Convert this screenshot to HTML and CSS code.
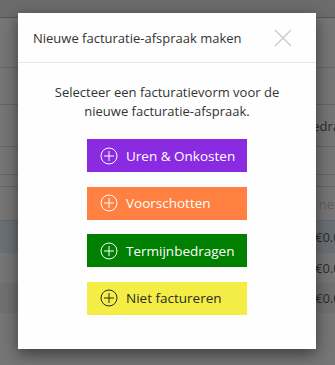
FILE: index.html
```html
<!DOCTYPE html>
<html lang="nl">
<head>
<meta charset="utf-8">
<title>Nieuwe facturatie-afspraak</title>
<link rel="stylesheet" href="styles.css">
</head>
<body>
<div class="page">
  <div class="bg-row r-top"></div>
  <div class="bg-row r-a"></div>
  <div class="bg-row r-b"></div>
  <div class="bg-row r-c"><span class="bg-text">Termijnbedragen</span></div>
  <div class="bg-row r-d"></div>
  <div class="bg-row r-e"></div>
  <div class="bg-row r-f"><span class="bg-text muted">Totaal netto</span></div>
  <div class="bg-row r-g"><span class="bg-text amount">€0.00</span></div>
  <div class="bg-row r-h"><span class="bg-text amount">€0.00</span></div>
  <div class="bg-row r-i"><span class="bg-text amount">€0.00</span></div>
</div>

<div class="modal">
  <div class="modal-header">
    <h4 class="modal-title">Nieuwe facturatie-afspraak maken</h4>
    <button class="close" aria-label="Sluiten">
      <svg width="18" height="18" viewBox="0 0 18 18"><path d="M1 1L17 17M17 1L1 17" stroke="#c8c8c8" stroke-width="1.2" fill="none"/></svg>
    </button>
  </div>
  <div class="modal-body">
    <p class="intro">Selecteer een facturatievorm voor de nieuwe facturatie-afspraak.</p>
    <div class="choices">
      <button class="choice purple"><svg class="plus" viewBox="0 0 18 18"><circle cx="9" cy="9" r="8" /><path d="M9 4V14M4 9H14"/></svg>Uren &amp; Onkosten</button>
      <button class="choice orange"><svg class="plus" viewBox="0 0 18 18"><circle cx="9" cy="9" r="8" /><path d="M9 4V14M4 9H14"/></svg>Voorschotten</button>
      <button class="choice green"><svg class="plus" viewBox="0 0 18 18"><circle cx="9" cy="9" r="8" /><path d="M9 4V14M4 9H14"/></svg>Termijnbedragen</button>
      <button class="choice yellow"><svg class="plus" viewBox="0 0 18 18"><circle cx="9" cy="9" r="8" /><path d="M9 4V14M4 9H14"/></svg>Niet factureren</button>
    </div>
  </div>
</div>
</body>
</html>
```

FILE: styles.css
```css
* { box-sizing: border-box; }
html, body {
  margin: 0;
  padding: 0;
  width: 335px;
  height: 365px;
  overflow: hidden;
  background: #767676;
  font-family: "Open Sans", "Liberation Sans", sans-serif;
}
.page {
  display: flex;
  flex-direction: column;
}
.bg-row {
  display: flex;
  align-items: center;
  padding-left: 258px;
  border-bottom: 1px solid #62666b;
  font-size: 13px;
  color: #2b2b2b;
  white-space: nowrap;
}
.r-top { height: 18px; background: #6c6c6c; border-bottom-color: #555; }
.r-a { height: 50px; }
.r-b { height: 37px; }
.r-c { height: 42px; }
.r-d { height: 28px; }
.r-e { height: 12px; }
.r-f { height: 34px; }
.r-g { height: 32px; background: #6a7075; border-bottom: none; }
.r-h { height: 30px; border-bottom: none; }
.r-i { height: 30px; background: #707070; border-bottom: none; }
.bg-text.muted { color: #5e5e5e; padding-left: 20px; }
.bg-text.amount { padding-left: 57px; }

.modal {
  position: absolute;
  top: 13px;
  left: 18px;
  width: 298px;
  height: 336px;
  background: #fefefe;
  box-shadow: 0 5px 15px rgba(0, 0, 0, 0.5);
  display: flex;
  flex-direction: column;
}
.modal-header {
  height: 50px;
  flex: none;
  display: flex;
  align-items: center;
  justify-content: space-between;
  padding: 0 24px 0 15px;
  border-bottom: 1px solid #e5e5e5;
}
.modal-title {
  margin: 0;
  font-size: 13px;
  font-weight: 400;
  color: #333;
}
.close {
  border: 0;
  background: none;
  padding: 0;
  width: 18px;
  height: 18px;
  display: flex;
}
.modal-body {
  padding: 20px 15px 0;
  display: flex;
  flex-direction: column;
  align-items: center;
}
.intro {
  margin: 0;
  width: 240px;
  text-align: center;
  font-size: 13px;
  line-height: 19px;
  color: #333;
}
.choices {
  margin-top: 18px;
  display: flex;
  flex-direction: column;
  gap: 14.5px;
}
.choice {
  width: 160px;
  height: 33px;
  border: 0;
  padding: 0 0 0 13px;
  display: flex;
  align-items: center;
  gap: 8px;
  font-family: "Open Sans", "Liberation Sans", sans-serif;
  font-size: 13.5px;
  color: #fff;
  text-align: left;
}
.plus {
  width: 18px;
  height: 18px;
  fill: none;
  stroke: currentColor;
  stroke-width: 1;
}
.purple { background: #8a2be2; }
.orange { background: #ff8040; }
.green { background: #008000; }
.yellow { background: #f4ed45; color: #2a2a2a; }
```
